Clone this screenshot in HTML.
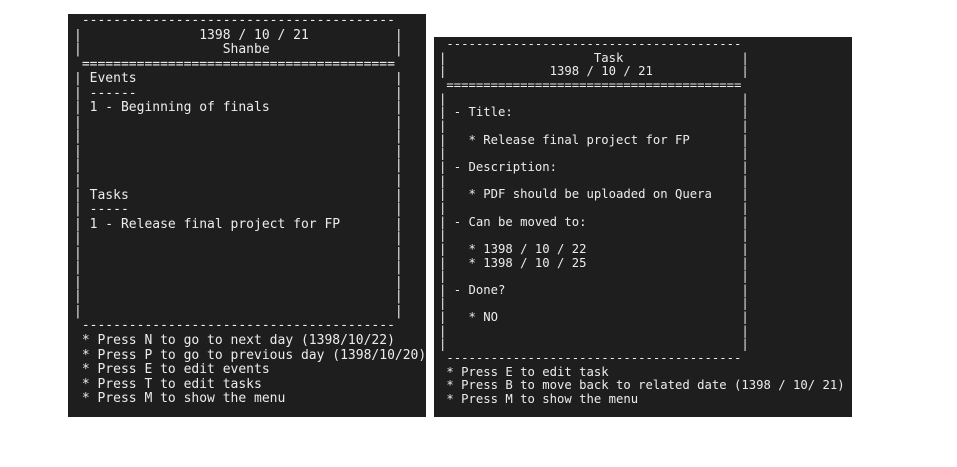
<!DOCTYPE html>
<html><head><style>
body{margin:0;width:957px;height:467px;background:#fff;position:relative;overflow:hidden}
.p{position:absolute;background:#1e1e1e}
pre{position:absolute;margin:0;color:#ececec;font-family:"DejaVu Sans Mono","Liberation Mono",monospace;white-space:pre}
.l{font-size:13px;line-height:14.55px;left:74px;top:14px}
.r{font-size:12.25px;line-height:13.65px;left:439px;top:38px}
</style></head><body>
<div class="p" style="left:68px;top:14px;width:358px;height:403px"></div>
<div class="p" style="left:434px;top:37px;width:418px;height:380px"></div>
<pre class="l"> ----------------------------------------
|               1398 / 10 / 21           |
|                  Shanbe                |
 ========================================
| Events                                 |
| ------                                 |
| 1 - Beginning of finals                |
|                                        |
|                                        |
|                                        |
|                                        |
|                                        |
| Tasks                                  |
| -----                                  |
| 1 - Release final project for FP       |
|                                        |
|                                        |
|                                        |
|                                        |
|                                        |
|                                        |
 ----------------------------------------
 * Press N to go to next day (1398/10/22)
 * Press P to go to previous day (1398/10/20)
 * Press E to edit events
 * Press T to edit tasks
 * Press M to show the menu</pre>
<pre class="r"> ----------------------------------------
|                    Task                |
|              1398 / 10 / 21            |
 ========================================
|                                        |
| - Title:                               |
|                                        |
|   * Release final project for FP       |
|                                        |
| - Description:                         |
|                                        |
|   * PDF should be uploaded on Quera    |
|                                        |
| - Can be moved to:                     |
|                                        |
|   * 1398 / 10 / 22                     |
|   * 1398 / 10 / 25                     |
|                                        |
| - Done?                                |
|                                        |
|   * NO                                 |
|                                        |
|                                        |
 ----------------------------------------
 * Press E to edit task
 * Press B to move back to related date (1398 / 10/ 21)
 * Press M to show the menu</pre>
</body></html>
